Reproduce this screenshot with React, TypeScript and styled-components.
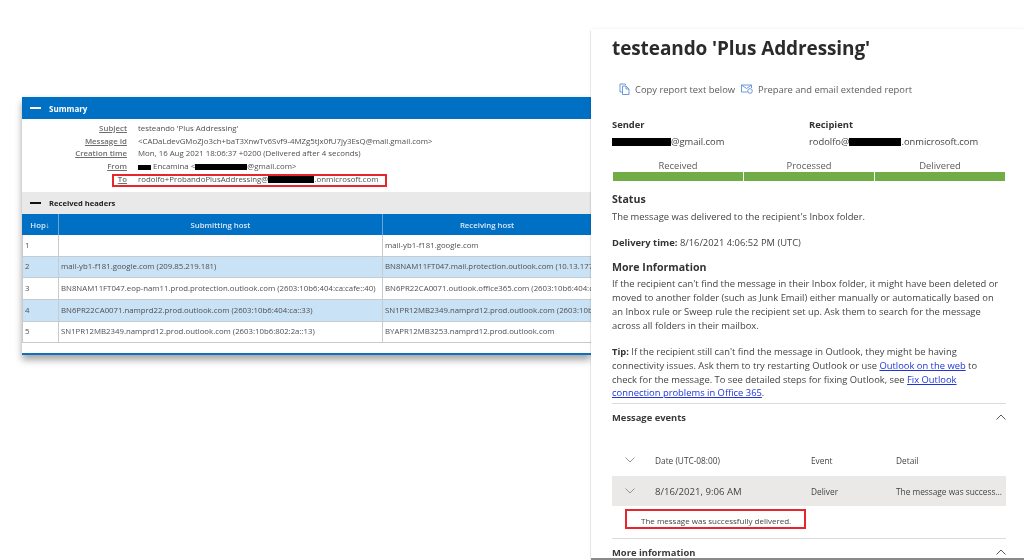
import React from "react";
import styled, { createGlobalStyle } from "styled-components";

const Global = createGlobalStyle`
  html, body { margin: 0; padding: 0; background: #fff; }
  body { width: 1024px; height: 560px; overflow: hidden; font-family: "Open Sans", "Noto Sans", sans-serif; }
`;

const Page = styled.div`
  display: flex;
  align-items: flex-start;
  width: 1024px;
  height: 560px;
  overflow: hidden;
  padding-left: 22px;
  box-sizing: border-box;
  filter: blur(0.45px);
`;

const LeftShot = styled.section`
  width: 569px;
  height: 256px;
  margin-top: 97px;
  flex: none;
  display: flex;
  flex-direction: column;
  background: #fff;
  border-bottom: 2.5px solid #0f6fc1;
  box-shadow: 0 5px 7px rgba(0, 0, 0, 0.35), 0 -1px 3px rgba(0, 0, 0, 0.05);
`;

const BlueBar = styled.div`
  height: 22px;
  flex: none;
  display: flex;
  align-items: center;
  gap: 8px;
  padding-left: 8px;
  background: #0070c4;
  color: #fff;
  font-size: 8px;
  font-weight: 700;
`;

const Dash = styled.span<{ $dark?: boolean }>`
  width: 11px;
  height: 2px;
  background: ${(p) => (p.$dark ? "#111" : "#fff")};
`;

const Fields = styled.dl`
  margin: 0;
  height: 73px;
  flex: none;
  padding-top: 3px;
  box-sizing: border-box;
  position: relative;
`;

const Field = styled.div`
  display: grid;
  grid-template-columns: 105px 1fr;
  column-gap: 11px;
  height: 12.7px;
  line-height: 12.7px;
  font-size: 7.85px;
  color: #4f4f4f;
  white-space: nowrap;
`;

const FieldName = styled.dt`
  text-align: right;
  font-weight: 600;
  color: #6e6e6e;
  text-decoration: underline;
`;

const FieldValue = styled.dd`
  margin: 0;
`;

const Redact = styled.span<{ $w: number; $h?: number }>`
  display: inline-block;
  width: ${(p) => p.$w}px;
  height: ${(p) => p.$h ?? 7}px;
  background: #000;
  vertical-align: -1px;
`;

const RedBox = styled.div`
  position: absolute;
  left: 90px;
  top: 55px;
  width: 275px;
  height: 13px;
  border: 2px solid #e8252b;
  box-sizing: border-box;
`;

const GreyBar = styled.div`
  height: 22px;
  flex: none;
  display: flex;
  align-items: center;
  gap: 8px;
  padding-left: 8px;
  background: #e9e9ea;
  color: #222;
  font-size: 7.6px;
  font-weight: 700;
`;

const HostTable = styled.div`
  display: grid;
  grid-template-columns: 37px 324px 208px;
  grid-template-rows: 21px 22px 21px 22px 22px 21px;
  font-size: 7.8px;
  color: #4f4f4f;
  white-space: nowrap;
`;

const HeadCell = styled.div`
  display: flex;
  align-items: center;
  justify-content: center;
  background: #0070c4;
  color: #dbe9f5;
  font-weight: 600;
  border-right: 1px solid #6aa7d8;
  &:nth-child(3) { border-right: none; }
`;

const Cell = styled.div<{ $tint: boolean }>`
  display: flex;
  align-items: center;
  padding: 0 0 2px 2px;
  overflow: hidden;
  background: ${(p) => (p.$tint ? "#cae2f5" : "#fff")};
  border-right: 1px solid #c4ccd2;
  border-bottom: 1px solid #c4ccd2;
  &:nth-child(3n + 1) { border-left: 1px solid #c4ccd2; }
  &:nth-child(3n) { border-right: none; }
`;

const Report = styled.section`
  position: relative;
  flex: 1;
  height: 529px;
  margin-top: 29px;
  padding: 0 18px 0 21px;
  box-sizing: border-box;
  background: #fff;
  box-shadow: 0 0 3px rgba(0, 0, 0, 0.08), 0 2px 1px rgba(0, 0, 0, 0.45);
  overflow: hidden;
  color: #444;
  font-size: 9.4px;
`;

const Title = styled.h1`
  margin: 0;
  height: 38px;
  line-height: 38px;
  font-size: 19px;
  font-weight: 700;
  color: #2b2b2b;
  letter-spacing: -0.1px;
`;

const Actions = styled.div`
  display: flex;
  align-items: center;
  height: 20px;
  margin-top: 12px;
  padding-left: 7px;
  color: #5c5c5c;
`;

const Action = styled.span`
  display: inline-flex;
  align-items: center;
  gap: 5px;
  margin-right: 6px;
`;

const People = styled.div`
  display: grid;
  grid-template-columns: 197px 1fr;
  margin-top: 19px;
`;

const Person = styled.div`
  display: flex;
  flex-direction: column;
  gap: 4px;
  line-height: 13px;
`;

const Strong = styled.strong`
  font-weight: 700;
  color: #333;
`;

const Steps = styled.div`
  display: grid;
  grid-template-columns: repeat(3, 1fr);
  column-gap: 1px;
  width: 392px;
  margin: 11px 0 0 1px;
`;

const Step = styled.div`
  text-align: center;
  line-height: 13px;
  color: #5c5c5c;
  &::after {
    content: "";
    display: block;
    height: 9px;
    background: #70ad47;
  }
`;

const SectionTitle = styled.h2`
  margin: 11px 0 0;
  font-size: 10.6px;
  line-height: 14px;
  font-weight: 700;
  color: #333;
`;

const Para = styled.p<{ $gap?: number }>`
  margin: ${(p) => p.$gap ?? 3}px 0 0;
  line-height: 13.7px;
  width: 396px;
`;

const Link = styled.a`
  color: #1f35d6;
  text-decoration: underline;
`;

const Divider = styled.hr<{ $gap: number }>`
  width: 394px;
  margin: ${(p) => p.$gap}px 0 0;
  border: none;
  border-top: 1px solid #dcdcdc;
`;

const Accordion = styled.div`
  width: 394px;
  display: flex;
  justify-content: space-between;
  align-items: center;
  margin-top: 6px;
  height: 14px;
  font-weight: 700;
  color: #3a3a3a;
  white-space: nowrap;
`;

const Grid = styled.div<{ $shade?: boolean }>`
  width: 394px;
  display: grid;
  grid-template-columns: 43px 156px 85px 1fr;
  align-items: center;
  height: ${(p) => (p.$shade ? "30px" : "32px")};
  margin-top: ${(p) => (p.$shade ? "0" : "20px")};
  background: ${(p) => (p.$shade ? "#ebe9e8" : "transparent")};
  white-space: nowrap;
  font-size: 8.3px;
`;

const DateValue = styled.span`
  font-size: 9.6px;
`;

const Detail = styled.div`
  position: relative;
  width: 394px;
  height: 28px;
  display: flex;
  align-items: center;
  padding-left: 29px;
  box-sizing: border-box;
  font-size: 8px;
`;

const Callout = styled.div`
  position: absolute;
  left: 13px;
  top: 3px;
  width: 181px;
  height: 20px;
  border: 2px solid #e8252b;
  box-sizing: border-box;
`;

const ChevronSvg = styled.svg<{ $up?: boolean; $light?: boolean }>`
  fill: none;
  stroke: ${(p) => (p.$light ? "#8a8a8a" : "#444")};
  stroke-width: 0.9;
  margin-left: ${(p) => (p.$up ? "0" : "13px")};
`;

const Chevron = ({ up, light }: { up?: boolean; light?: boolean }) => (
  <ChevronSvg width="10" height="6" viewBox="0 0 10 6" $up={up} $light={light}>
    <path d={up ? "M0.5 5.5 L5 1 L9.5 5.5" : "M0.5 0.5 L5 5 L9.5 0.5"} />
  </ChevronSvg>
);

const rows = [
  ["1", "", "mail-yb1-f181.google.com"],
  ["2", "mail-yb1-f181.google.com (209.85.219.181)", "BN8NAM11FT047.mail.protection.outlook.com (10.13.177.232)"],
  ["3", "BN8NAM11FT047.eop-nam11.prod.protection.outlook.com (2603:10b6:404:ca:cafe::40)", "BN6PR22CA0071.outlook.office365.com (2603:10b6:404:ca::33)"],
  ["4", "BN6PR22CA0071.namprd22.prod.outlook.com (2603:10b6:404:ca::33)", "SN1PR12MB2349.namprd12.prod.outlook.com (2603:10b6:802:2a::13)"],
  ["5", "SN1PR12MB2349.namprd12.prod.outlook.com (2603:10b6:802:2a::13)", "BYAPR12MB3253.namprd12.prod.outlook.com"],
];

export default function App() {
  return (
    <>
      <Global />
      <Page>
        <LeftShot>
          <BlueBar><Dash />Summary</BlueBar>
          <Fields>
            <Field><FieldName>Subject</FieldName><FieldValue>testeando 'Plus Addressing'</FieldValue></Field>
            <Field><FieldName>Message Id</FieldName><FieldValue>&lt;CADaLdevGMoZJo3ch+baT3XnwTv6Svf9-4MZg5tJx0fU7jy3EsQ@mail.gmail.com&gt;</FieldValue></Field>
            <Field><FieldName>Creation time</FieldName><FieldValue>Mon, 16 Aug 2021 18:06:37 +0200 (Delivered after 4 seconds)</FieldValue></Field>
            <Field><FieldName>From</FieldName><FieldValue><Redact $w={13} $h={5} /> Encamina &lt;<Redact $w={52} $h={6} />@gmail.com&gt;</FieldValue></Field>
            <Field><FieldName>To</FieldName><FieldValue>rodolfo+ProbandoPlusAddressing@<Redact $w={46} />.onmicrosoft.com</FieldValue></Field>
            <RedBox />
          </Fields>
          <GreyBar><Dash $dark />Received headers</GreyBar>
          <HostTable>
            <HeadCell>Hop↓</HeadCell>
            <HeadCell>Submitting host</HeadCell>
            <HeadCell>Receiving host</HeadCell>
            {rows.flatMap((r, i) =>
              r.map((c, j) => <Cell key={`${i}-${j}`} $tint={i % 2 === 1}>{c}</Cell>)
            )}
          </HostTable>
        </LeftShot>
        <Report>
          <Title>testeando 'Plus Addressing'</Title>
          <Actions>
            <Action>
              <svg width="11" height="12" viewBox="0 0 11 12" fill="none" stroke="#5b8ed6" strokeWidth="0.9">
                <path d="M3.5 9H1V1h5l1 1M3.5 3H7l3 3v5.5H3.5zM7 3v3h3" />
              </svg>
              Copy report text below
            </Action>
            <Action>
              <svg width="12" height="10" viewBox="0 0 12 10" fill="none" stroke="#5b8ed6" strokeWidth="0.9">
                <path d="M0.5 1h10v3M0.5 1v7h6M0.5 1l5 3.5L10.5 1" />
                <circle cx="9" cy="7" r="2.3" />
              </svg>
              Prepare and email extended report
            </Action>
          </Actions>
          <People>
            <Person><Strong>Sender</Strong><span><Redact $w={59} $h={8} />@gmail.com</span></Person>
            <Person><Strong>Recipient</Strong><span>rodolfo@<Redact $w={52} $h={8} />.onmicrosoft.com</span></Person>
          </People>
          <Steps>
            <Step>Received</Step>
            <Step>Processed</Step>
            <Step>Delivered</Step>
          </Steps>
          <SectionTitle>Status</SectionTitle>
          <Para $gap={4}>The message was delivered to the recipient's Inbox folder.</Para>
          <Para $gap={12}><Strong>Delivery time:</Strong> 8/16/2021 4:06:52 PM (UTC)</Para>
          <SectionTitle>More Information</SectionTitle>
          <Para>If the recipient can't find the message in their Inbox folder, it might have been deleted or<br />moved to another folder (such as Junk Email) either manually or automatically based on<br />an Inbox rule or Sweep rule the recipient set up. Ask them to search for the message<br />across all folders in their mailbox.</Para>
          <Para $gap={13}><Strong>Tip:</Strong> If the recipient still can't find the message in Outlook, they might be having<br />connectivity issues. Ask them to try restarting Outlook or use <Link>Outlook on the web</Link> to<br />check for the message. To see detailed steps for fixing Outlook, see <Link>Fix Outlook</Link><br /><Link>connection problems in Office 365</Link>.</Para>
          <Divider $gap={3} />
          <Accordion>Message events<Chevron up /></Accordion>
          <Grid><Chevron light /><span>Date (UTC-08:00)</span><span>Event</span><span>Detail</span></Grid>
          <Grid $shade><Chevron light /><DateValue>8/16/2021, 9:06 AM</DateValue><span>Deliver</span><span>The message was success...</span></Grid>
          <Detail>The message was successfully delivered.<Callout /></Detail>
          <Divider $gap={4} />
          <Accordion>More information<Chevron up /></Accordion>
        </Report>
      </Page>
    </>
  );
}
